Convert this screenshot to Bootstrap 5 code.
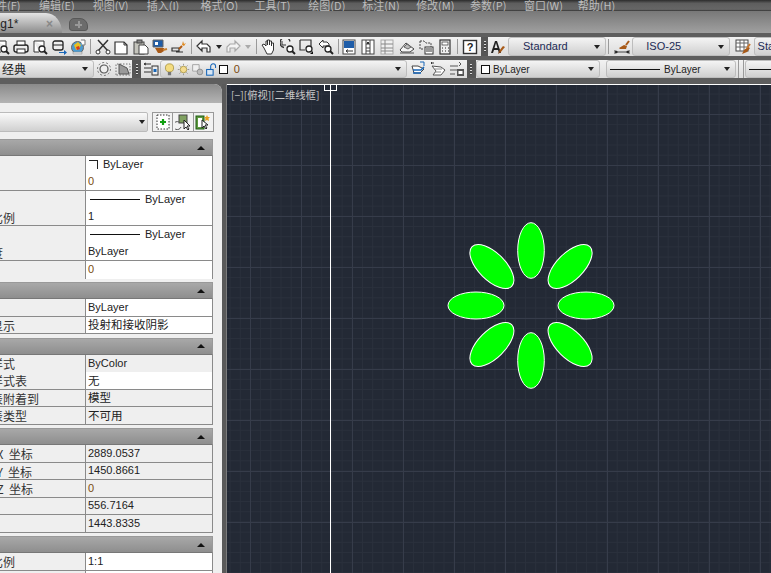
<!DOCTYPE html>
<html lang="zh">
<head>
<meta charset="utf-8">
<title>AutoCAD</title>
<link href="https://cdn.jsdelivr.net/npm/bootstrap@5.3.0/dist/css/bootstrap.min.css" rel="stylesheet">
<style>
html,body{margin:0;width:771px;height:573px;overflow:hidden;background:#5e5e5e;font-family:"Liberation Sans","Noto Sans CJK SC",sans-serif;font-size:11px;color:#222}
.cjk{font-family:"Noto Sans CJK SC","Liberation Sans",sans-serif}
.menubar{height:11px;background:linear-gradient(#2c2c2c,#5e5e5e 30%,#666 85%,#333);overflow:hidden;color:#bdbdbd;gap:20.9px;margin-left:-15px;font-size:11px}
.menubar span{width:33px;white-space:nowrap;flex:none;line-height:8px;margin-top:-1px}
.tabbar{height:22px;background:linear-gradient(#787878,#a0a0a0);padding-top:2px}
.dtab{width:102px;margin-left:-40px;height:20px;background:linear-gradient(#e4e4e4,#8c8c8c);border-radius:0 16px 0 0/0 20px 0 0;padding-left:3px;font-size:12px;line-height:22px;color:#222}
.dtab b{font-weight:400;width:83px;flex:none}
.dtab i{font-style:normal;color:#888;font-weight:700;font-size:12px}
.ntab{width:19px;height:13px;margin:5px 0 0 7px;background:#6c6c6c;border-radius:5px 8px 3px 3px;border:1px solid #585858;display:flex;align-items:center;justify-content:center}
.ntab::after{content:"";width:7px;height:7px;background:linear-gradient(#999,#999) center/7px 2px no-repeat,linear-gradient(#999,#999) center/2px 7px no-repeat}
.gap4{height:4px;background:#5e5e5e}
.tool{height:19px;background:linear-gradient(#f2f2f2,#dcdcdc);flex-wrap:nowrap;overflow:hidden}
.tool2{height:18px}
.gap3{height:4px;background:#5e5e5e}
.ic{width:19px;height:19px;flex:none;display:flex;align-items:center;justify-content:center}
.ic svg{width:16px;height:16px}
.ic.w{width:19.4px}
.ar{width:10px;height:19px;flex:none;display:flex;align-items:center;justify-content:center}
.ar::after,.combo::after{content:"";display:block;border:3px solid transparent;border-top:4px solid #222;border-bottom:0}
.ar.off::after{border-top-color:#aaa}
.sep{width:1px;height:15px;background:#9a9a9a;flex:none;margin:0 2px}
.sep.m3{margin-left:3.5px}
.sep.n{margin-right:0}
.start{margin-left:-7.5px}
.m2{margin-left:1px}.m3{margin-left:1.5px}.m4{margin-left:2.5px}
.grip{width:7px;background:#565656;align-self:stretch;flex:none;display:flex;justify-content:center;align-items:center}
.grip.g1{margin-left:1.9px}
.tool2 .grip{width:9px}
.grip::before{content:"";width:2px;height:11px;background:repeating-linear-gradient(#ddd 0 1px,#444 1px 3px)}
.combo{height:100%;flex:none;background:linear-gradient(#f4f4f4,#cfcfcf);border:1px solid #bdbdbd;border-radius:3px;display:flex;align-items:center;position:relative;padding:0 5px 0 3px;white-space:nowrap;overflow:hidden}
.combo::after{margin-left:auto;flex:none}
.c-std{width:98px;margin-left:1px;color:#1c2a55;padding-left:14px}
.c-iso{width:98px;margin-left:.8px;color:#1c2a55;padding-left:13px}
.c-sta{width:30px;margin-left:1.5px;color:#1c2a55}
.c-wk{width:148px;margin-left:-54px;padding-left:3px;font-size:12px}
.c-lay{width:247px;padding-left:1px}
.c-lay .ic{width:14px}
.c-lay .ic svg{width:13px;height:13px}
.c-by{width:124px;margin-left:.5px;font-size:10px}
.c-lt{width:130px;margin-left:6px;font-size:10px}
.c-lt .ln,.c-lt2 .ln{margin:0 4px 0 0}
.c-lt2{width:30px;margin-left:1px}
.swatch{width:9px;height:9px;border:1px solid #111;background:#fff;flex:none;margin:0 3px 0 1px}
.ln{height:1px;background:#111;flex:none}
.dbl{width:6px;height:100%;flex:none;margin-left:2px;border-left:1px solid #999;border-right:1px solid #999}
.workspace{height:489px;margin-top:6px}
.panel{width:262px;margin-left:-40px;background:#efefef;flex:none;border-radius:0 8px 0 0;overflow:hidden;height:100%}
.gutter{width:5px;flex:none;background:#5a5a5a;border-right:1px solid #7c7c7c}
.phead{height:19px;background:linear-gradient(#8a8a8a,#b4b4b4)}
.pcombo-row{height:36px;padding:9px 0 7px 0}
.pcombo{width:188px;height:20px;background:linear-gradient(#fafafa,#d0d0d0);border:1px solid #bbb;border-radius:2px;display:flex;align-items:center;justify-content:flex-end;padding-right:2px}
.pcombo::after{content:"";border:3px solid transparent;border-top:4px solid #222;border-bottom:0}
.pbtns{margin-left:4px;height:20px;width:62px;border:1px solid #999;background:#f2f2f2}
.pbtns span{flex:1;display:flex;align-items:center;justify-content:center;border-right:1px solid #999}
.pbtns span:last-child{border:0}
.pbtns svg{width:16px;height:16px}
.group{width:253px;margin-bottom:3.5px}
.ghead{height:17px;background:linear-gradient(#a8a8a8,#8e8e8e);border:1px solid #999;border-bottom:1px solid #777;display:flex;justify-content:flex-end;align-items:center;padding-right:7px}
.ghead::after{content:"";border:4px solid transparent;border-bottom:4px solid #111;border-top:0}
.row-p{height:17.5px;display:flex;border-right:1px solid #8a8a8a;line-height:17px}
.row-p.b{border-bottom:1px solid #8a8a8a}
.row-p>div:first-child{width:126px;flex:none;padding-left:7px;border-right:1px solid #8a8a8a;white-space:nowrap;font-size:12px;font-family:"Noto Sans CJK SC","Liberation Sans",sans-serif;overflow:hidden;color:#333;background:#efefef}
.row-p>div:last-child{flex:1;background:#fff;padding-left:2px;display:flex;align-items:center;white-space:nowrap;overflow:hidden}
.row-p.ro>div:last-child{background:#efefef}
.zh{font-family:"Noto Sans CJK SC","Liberation Sans",sans-serif;font-size:11.5px}
.cor{width:9px;height:9px;border-top:1.5px solid #222;border-right:1.5px solid #222;margin:0 5px 0 1px;flex:none}
.l50{width:50px;margin:0 5px 0 2px}
.o{color:#7a4a10}
.canvas{flex:1;position:relative;overflow:hidden;background-color:#232935;background-image:linear-gradient(#363c4a 1px,transparent 1px),linear-gradient(90deg,#363c4a 1px,transparent 1px),linear-gradient(#2a303c 1px,transparent 1px),linear-gradient(90deg,#2a303c 1px,transparent 1px);background-size:51px 51px,51px 51px,10.2px 10.2px,10.2px 10.2px;background-position:0 30px,23px 0,0 9.6px,2.6px 0}
.drawing{position:absolute;inset:0;width:100%;height:100%}
.vp{position:absolute;left:4px;top:4px;color:#c8c8c8;font-size:10.3px;line-height:14px;white-space:nowrap}
</style>
</head>
<body>
<svg width="0" height="0" class="position-absolute">
<defs>
<symbol id="print" viewBox="0 0 16 16"><rect x="1" y="6" width="14" height="7" rx="2" fill="#eee" stroke="#222" stroke-width="1.400"/><rect x="4" y="2" width="8" height="4" fill="#fff" stroke="#222"/><rect x="4" y="10" width="8" height="4" fill="#fff" stroke="#222"/></symbol>
<symbol id="prev" viewBox="0 0 16 16"><path d="M2 2h10v5M2 2v11h5" fill="#fff" stroke="#333"/><circle cx="10" cy="10" r="3" fill="#fff" stroke="#222" stroke-width="1.300"/><path d="M12 12l3 3" stroke="#222" stroke-width="2"/></symbol>
<symbol id="pub" viewBox="0 0 16 16"><rect x="2" y="2" width="10" height="9" rx="2" fill="#eee" stroke="#222" stroke-width="1.300"/><path d="M2 6h10" stroke="#222"/><path d="M8 13h5v-2l3 2.500-3 2.500v-2H8z" fill="#1766b8"/></symbol>
<symbol id="earth" viewBox="0 0 16 16"><circle cx="7.500" cy="8.500" r="6" fill="#4c9bd0" stroke="#666"/><path d="M4 6l4-3 3 3-2 4-3 1z" fill="#e8c020"/><path d="M6 8l3-1 1 3-3 1z" fill="#d83a20"/><path d="M11 1h4v5h-3" fill="#fff" stroke="#777"/><path d="M3 13h9v2H3z" fill="#ddd" stroke="#888" stroke-width=".5"/></symbol>
<symbol id="cut" viewBox="0 0 16 16"><path d="M3 1l10 11M13 1L3 12" stroke="#333" stroke-width="1.500"/><circle cx="3" cy="13" r="2" fill="#fff" stroke="#333"/><circle cx="13" cy="13" r="2" fill="#fff" stroke="#333"/></symbol>
<symbol id="copy" viewBox="0 0 16 16"><path d="M1 3h9l3 3v9H1z" fill="#fff" stroke="#333" stroke-width="1.200"/><path d="M10 3v3h3" fill="none" stroke="#333"/></symbol>
<symbol id="paste" viewBox="0 0 16 16"><rect x="1" y="3" width="10" height="12" fill="#c4c4bc" stroke="#444"/><rect x="4" y="1" width="5" height="3" fill="#888" stroke="#444"/><path d="M6 6h6l3 3v6H6z" fill="#fff" stroke="#444"/></symbol>
<symbol id="match" viewBox="0 0 16 16"><path d="M1 1h10v7H1z" fill="#1f5da8" stroke="#666"/><path d="M3 3h3v3H3z" fill="#fff"/><path d="M3 9h9v3l-3 2H6z" fill="#a85a18"/><path d="M11 11l4-1" stroke="#c88030" stroke-width="2"/></symbol>
<symbol id="bedit" viewBox="0 0 16 16"><path d="M1 9h7v3H1zM5 13h7" fill="none" stroke="#333" stroke-width="1.200"/><path d="M12 2l1 3 2-1-2 3-2-1z" fill="#e08a20"/><path d="M11 7l-3 3" stroke="#b05a10" stroke-width="2"/></symbol>
<symbol id="undo" viewBox="0 0 16 16"><path d="M1 7l5-5v3h5l3 3v5h-3V9H6v3z" fill="#fff" stroke="#333" stroke-width="1.200"/></symbol>
<symbol id="redo" viewBox="0 0 16 16"><path d="M15 7l-5-5v3H5L2 8v5h3V9h5v3z" fill="#f4f4f4" stroke="#aaa" stroke-width="1.200"/></symbol>
<symbol id="hand" viewBox="0 0 16 16"><path d="M3 9L1 6l2-1 2 2V2h1.500v4V1h2v5V2h2v5V4h2v7l-2 4H6z" fill="#fff" stroke="#333"/></symbol>
<symbol id="zrt" viewBox="0 0 16 16"><path d="M10 2.500a5 5 0 1 0 -6 6" fill="none" stroke="#333" stroke-width="1.300"/><path d="M2 2v4h4" fill="none" stroke="#333"/><circle cx="10" cy="10" r="3" fill="#fff" stroke="#222" stroke-width="1.300"/><path d="M12 12l3 3" stroke="#222" stroke-width="2"/></symbol>
<symbol id="zwin" viewBox="0 0 16 16"><path d="M1 1h11v6M1 1v10h5" fill="none" stroke="#333" stroke-width="1.200"/><circle cx="10" cy="10" r="3" fill="#fff" stroke="#222" stroke-width="1.300"/><path d="M14 12v3h-3z" fill="#111"/></symbol>
<symbol id="zpre" viewBox="0 0 16 16"><path d="M1 5l4-4v2h4l2 2v2H5v2z" fill="#fff" stroke="#333"/><circle cx="10" cy="10" r="3" fill="#fff" stroke="#222" stroke-width="1.300"/><path d="M12 12l3 3" stroke="#222" stroke-width="2"/></symbol>
<symbol id="props" viewBox="0 0 16 16"><rect x="2" y="1" width="12" height="14" fill="#fff" stroke="#444"/><rect x="3" y="2" width="10" height="7" fill="#1f5da8"/><path d="M5 12h7M5 12l2-1.500M5 12l2 1.500" stroke="#333"/></symbol>
<symbol id="dc" viewBox="0 0 16 16"><rect x="2" y="1" width="12" height="14" fill="#fff" stroke="#444"/><path d="M6 1v14M10 1v14M6 5h4M6 9h4M6 12h4" stroke="#444"/><rect x="7" y="3" width="2" height="2" fill="#333"/></symbol>
<symbol id="pal" viewBox="0 0 16 16"><rect x="2" y="1" width="12" height="14" fill="#f0f0f0" stroke="#aaa"/><path d="M6 1v14M2 5h12M2 9h12M2 12h12" stroke="#888"/></symbol>
<symbol id="sheet" viewBox="0 0 16 16"><path d="M1 11l6-7 8 6-4 3H3z" fill="#f4f4f4" stroke="#444"/><path d="M5 8l3-3 4 3-3 2z" fill="#bbb" stroke="#666"/><path d="M1 14h14" stroke="#555"/></symbol>
<symbol id="mark" viewBox="0 0 16 16"><path d="M2 2h4l2 2h5v4M2 2v8h4" fill="none" stroke="#444" stroke-dasharray="2 1"/><rect x="7" y="8" width="8" height="7" fill="#fff" stroke="#333"/><path d="M8 10h6M8 12h6" stroke="#333"/></symbol>
<symbol id="calc" viewBox="0 0 16 16"><rect x="3" y="1" width="10" height="14" fill="#eee" stroke="#333" stroke-width="1.200"/><rect x="5" y="3" width="6" height="3" fill="#fff" stroke="#333" stroke-width=".7"/><path d="M5 9h1M8 9h1M11 9h1M5 12h1M8 12h1M11 12h1" stroke="#222"/></symbol>
<symbol id="sty" viewBox="0 0 16 16"><path d="M5 1L1 13h2l1-3h4l1 3h2L7 1zM4.500 8L6 3l1.500 5z" fill="#222" transform="translate(0 1)"/><path d="M10 14l5-6-2-1-4 5z" fill="#a85a18"/><path d="M8 15l1-3 2 1z" fill="#7b3d10"/></symbol>
<symbol id="dim" viewBox="0 0 16 16"><path d="M1 11v4M15 11v4M1 13h14M1 13l2-1v2zM15 13l-2-1v2z" stroke="#222" fill="#222" stroke-width=".8"/><path d="M5 9l5-3 3 1-1 3H6z" fill="#a85a18"/><path d="M12 6l3-4" stroke="#a85a18" stroke-width="2"/></symbol>
<symbol id="tbl" viewBox="0 0 16 16"><rect x="1" y="1" width="12" height="11" fill="#fff" stroke="#444"/><path d="M1 4h12M5 1v11M9 1v11M1 8h12" stroke="#666"/><path d="M7 15l2-4 4-3 2 1-3 4z" fill="#a85a18"/><path d="M12 9l3-4" stroke="#c87830" stroke-width="2"/></symbol>
<symbol id="gear" viewBox="0 0 16 16"><circle cx="8" cy="8" r="4" fill="#eee" stroke="#555" stroke-width="1.200"/><circle cx="8" cy="8" r="6.500" fill="none" stroke="#777" stroke-dasharray="2 2"/></symbol>
<symbol id="wk2" viewBox="0 0 16 16"><path d="M1 14V3h14v11z" fill="none" stroke="#777" stroke-dasharray="1.500 1.500"/><path d="M4 13V3l8 4 2 6z" fill="#999" stroke="#555"/></symbol>
<symbol id="lstate" viewBox="0 0 16 16"><path d="M1 3h7M1 7h7M1 11h7" stroke="#333"/><path d="M1 3l2-1M1 3l2 1" stroke="#333"/><rect x="9" y="5" width="6" height="9" fill="#eee" stroke="#333"/><rect x="10.500" y="8" width="3" height="3" fill="#1766b8"/></symbol>
<symbol id="bulb" viewBox="0 0 16 16"><circle cx="8" cy="6" r="5" fill="#f4dc80" stroke="#a89440"/><path d="M6 11h4v4H6z" fill="#777"/></symbol>
<symbol id="sun" viewBox="0 0 16 16"><circle cx="8" cy="8" r="4" fill="#f4dc90" stroke="#a89440"/><path d="M8 1v2M8 13v2M1 8h2M13 8h2M3 3l1.500 1.500M11.500 11.500L13 13M13 3l-1.500 1.500M4.500 11.500L3 13" stroke="#888"/></symbol>
<symbol id="lvp" viewBox="0 0 16 16"><path d="M2 2h8v8H2z" fill="#f0f0f0" stroke="#999"/><circle cx="11" cy="11" r="3.500" fill="#bbb" stroke="#888"/></symbol>
<symbol id="lock" viewBox="0 0 16 16"><path d="M7 8V4a3 3 0 0 1 6 0v2" fill="none" stroke="#1766b8" stroke-width="1.300"/><rect x="2" y="8" width="8" height="7" fill="#d8e6f4" stroke="#1766b8" stroke-width="1.300"/></symbol>
<symbol id="lprev" viewBox="0 0 16 16"><path d="M1 5l6 0 6 3-4 4H3z" fill="#fff" stroke="#444"/><path d="M2 9h8l3-3" stroke="#1766b8" stroke-width="1.500" fill="none"/><path d="M2 12h8" stroke="#1766b8" stroke-width="1.500"/><path d="M9 1l4 0 0 4" fill="none" stroke="#1766b8"/></symbol>
<symbol id="lmk" viewBox="0 0 16 16"><path d="M1 2h3M1 2l1-1M1 2l1 1" stroke="#333"/><path d="M2 5l9 1 4 3-4 5H3l3-4z" fill="#fff" stroke="#555"/><path d="M5 8h7M5 11h6" stroke="#888"/></symbol>
<symbol id="liso" viewBox="0 0 16 16"><path d="M1 5h8M1 9h8M1 13h5" stroke="#555"/><path d="M10 1l2 2-2 2" fill="none" stroke="#555"/><rect x="8" y="8" width="7" height="7" fill="#555"/><rect x="9.500" y="10" width="4" height="3" fill="#fff"/></symbol>
<symbol id="pick" viewBox="0 0 16 16"><rect x="2" y="1" width="12" height="14" fill="#fff" stroke="#333" stroke-dasharray="1.500 1.500"/><path d="M8 5v6M5 8h6" stroke="#12a012" stroke-width="2.200"/></symbol>
<symbol id="sel" viewBox="0 0 16 16"><rect x="4" y="1" width="8" height="8" fill="#7fa060" stroke="#444"/><path d="M4 8a4 4 0 1 0 2 5" fill="none" stroke="#555"/><path d="M9 6v9l2-2 2 3 1-1-2-3h3z" fill="#fff" stroke="#222"/></symbol>
<symbol id="qs" viewBox="0 0 16 16"><rect x="1" y="2" width="8" height="13" fill="#5f9a40" stroke="#1c5a10"/><rect x="3" y="4" width="4" height="9" fill="#fff"/><path d="M7 6v8l2-2 2 3 1-1-2-3h3z" fill="#fff" stroke="#222"/><path d="M12 1l1 2 2 0-1.500 1.500L14 7l-2-1-2 1 .5-2.500L9 3h2z" fill="#e8a020"/></symbol>
</defs>
</svg>

<div class="menubar d-flex cjk align-items-center">
<span>文件(F)</span><span>编辑(E)</span><span>视图(V)</span><span>插入(I)</span><span>格式(O)</span><span>工具(T)</span><span>绘图(D)</span><span>标注(N)</span><span>修改(M)</span><span>参数(P)</span><span>窗口(W)</span><span>帮助(H)</span>
</div>

<div class="tabbar d-flex">
<div class="dtab d-flex"><b>Drawing1*</b><i>×</i></div>
<div class="ntab"></div>
</div>

<div class="gap4"></div>

<div class="tool d-flex align-items-center">
<span class="ic start"><svg><use href="#prev"/></svg></span>
<span class="ic"><svg><use href="#print"/></svg></span>
<span class="ic"><svg><use href="#prev"/></svg></span>
<span class="ic"><svg><use href="#pub"/></svg></span>
<span class="ic"><svg><use href="#earth"/></svg></span>
<span class="sep"></span>
<span class="ic m2"><svg><use href="#cut"/></svg></span>
<span class="ic"><svg><use href="#copy"/></svg></span>
<span class="ic"><svg><use href="#paste"/></svg></span>
<span class="ic"><svg><use href="#match"/></svg></span>
<span class="ic"><svg><use href="#bedit"/></svg></span>
<span class="sep"></span>
<span class="ic m2"><svg><use href="#undo"/></svg></span>
<span class="ar"></span>
<span class="ic"><svg><use href="#redo"/></svg></span>
<span class="ar off"></span>
<span class="sep m3"></span>
<span class="ic"><svg><use href="#hand"/></svg></span>
<span class="ic w"><svg><use href="#zrt"/></svg></span>
<span class="ic w"><svg><use href="#zwin"/></svg></span>
<span class="ic w"><svg><use href="#zpre"/></svg></span>
<span class="sep n"></span>
<span class="ic"><svg><use href="#props"/></svg></span>
<span class="ic w"><svg><use href="#dc"/></svg></span>
<span class="ic w"><svg><use href="#pal"/></svg></span>
<span class="ic w"><svg><use href="#sheet"/></svg></span>
<span class="ic w"><svg><use href="#mark"/></svg></span>
<span class="ic w"><svg><use href="#calc"/></svg></span>
<span class="sep"></span>
<span class="ic"><svg viewBox="0 0 16 16"><rect x="1.500" y="1.500" width="13" height="13" fill="#fff" stroke="#333" stroke-width="1.400"/><text x="8" y="12" text-anchor="middle" font-size="11" font-weight="700" font-family="Liberation Sans" fill="#222">?</text></svg></span>
<span class="grip g1"></span>
<span class="ic"><svg><use href="#sty"/></svg></span>
<span class="combo c-std">Standard</span>
<span class="sep"></span>
<span class="ic m3"><svg><use href="#dim"/></svg></span>
<span class="combo c-iso">ISO-25</span>
<span class="ic m3 ms-1"><svg><use href="#tbl"/></svg></span>
<span class="combo c-sta">Standard</span>
</div>

<div class="gap3"></div>

<div class="tool tool2 d-flex align-items-center">
<span class="combo c-wk cjk">AutoCAD 经典</span>
<span class="ic"><svg><use href="#gear"/></svg></span>
<span class="ic"><svg><use href="#wk2"/></svg></span>
<span class="grip"></span>
<span class="ic"><svg><use href="#lstate"/></svg></span>
<span class="combo c-lay">
<span class="ic"><svg><use href="#bulb"/></svg></span>
<span class="ic"><svg><use href="#sun"/></svg></span>
<span class="ic"><svg><use href="#lvp"/></svg></span>
<span class="ic"><svg><use href="#lock"/></svg></span>
<span class="swatch"></span>
<span class="ps-1 o">0</span>
</span>
<span class="ic m4"><svg><use href="#lprev"/></svg></span>
<span class="ic"><svg><use href="#lmk"/></svg></span>
<span class="ic"><svg><use href="#liso"/></svg></span>
<span class="grip"></span>
<span class="combo c-by"><span class="swatch"></span>ByLayer</span>
<span class="combo c-lt"><span class="ln l50"></span>ByLayer</span>
<span class="dbl"></span>
<span class="combo c-lt2"><span class="ln l50"></span></span>
</div>

<div class="d-flex workspace">
<div class="panel">
<div class="phead"></div>
<div class="pcombo-row d-flex">
<div class="pcombo"></div>
<div class="pbtns d-flex">
<span><svg><use href="#pick"/></svg></span>
<span><svg><use href="#sel"/></svg></span>
<span><svg><use href="#qs"/></svg></span>
</div>
</div>

<div class="group">
<div class="ghead"></div>
<div class="row-p"><div>颜色</div><div><span class="cor"></span>ByLayer</div></div>
<div class="row-p b"><div>图层</div><div class="o">0</div></div>
<div class="row-p"><div>线型</div><div><span class="ln l50"></span>ByLayer</div></div>
<div class="row-p b"><div>线型比例</div><div>1</div></div>
<div class="row-p"><div>线宽</div><div><span class="ln l50"></span>ByLayer</div></div>
<div class="row-p b"><div>透明度</div><div>ByLayer</div></div>
<div class="row-p"><div>厚度</div><div class="o">0</div></div>
</div>

<div class="group">
<div class="ghead"></div>
<div class="row-p b"><div>材质</div><div>ByLayer</div></div>
<div class="row-p b"><div>阴影显示</div><div class="zh">投射和接收阴影</div></div>
</div>

<div class="group">
<div class="ghead"></div>
<div class="row-p ro"><div>打印样式</div><div>ByColor</div></div>
<div class="row-p b"><div>打印样式表</div><div class="zh">无</div></div>
<div class="row-p ro b"><div>打印表附着到</div><div class="zh">模型</div></div>
<div class="row-p ro b"><div>打印表类型</div><div class="zh">不可用</div></div>
</div>

<div class="group">
<div class="ghead"></div>
<div class="row-p ro b"><div>圆心&nbsp; X&nbsp; 坐标</div><div>2889.0537</div></div>
<div class="row-p ro b"><div>圆心&nbsp; Y&nbsp; 坐标</div><div>1450.8661</div></div>
<div class="row-p ro b"><div>圆心&nbsp; Z&nbsp; 坐标</div><div class="o">0</div></div>
<div class="row-p ro b"><div>高度</div><div>556.7164</div></div>
<div class="row-p ro b"><div>宽度</div><div>1443.8335</div></div>
</div>

<div class="group">
<div class="ghead"></div>
<div class="row-p b"><div>注释比例</div><div>1:1</div></div>
<div class="row-p b"><div>&nbsp;</div><div>&nbsp;</div></div>
</div>
</div>
<div class="gutter"></div>
<div class="canvas">
<svg class="drawing" viewBox="227 84 544 489" preserveAspectRatio="xMinYMin meet">
<path d="M227 84.500H771M330.500 84V573" stroke="#fff" stroke-width="1" fill="none"/>
<rect x="324.500" y="84.500" width="12" height="6" fill="none" stroke="#fff"/>
<g fill="#00ff00" stroke="#fff" stroke-width="1">
<ellipse cx="531" cy="250.500" rx="13.300" ry="27.800"/>
<ellipse cx="531" cy="360.500" rx="13.300" ry="27.800"/>
<ellipse cx="476" cy="305.500" rx="28" ry="13.500"/>
<ellipse cx="586" cy="305.500" rx="28" ry="13.500"/>
<ellipse cx="491.900" cy="266.500" rx="28" ry="13.500" transform="rotate(45 491.900 266.500)"/>
<ellipse cx="570.100" cy="266.500" rx="28" ry="13.500" transform="rotate(-45 570.100 266.500)"/>
<ellipse cx="491.900" cy="344.500" rx="28" ry="13.500" transform="rotate(-45 491.900 344.500)"/>
<ellipse cx="570.100" cy="344.500" rx="28" ry="13.500" transform="rotate(45 570.100 344.500)"/>
</g>
</svg>
<div class="vp cjk">[−][俯视][二维线框]</div>
</div>
</div>
<script src="https://cdn.jsdelivr.net/npm/bootstrap@5.3.0/dist/js/bootstrap.bundle.min.js"></script>
</body>
</html>
